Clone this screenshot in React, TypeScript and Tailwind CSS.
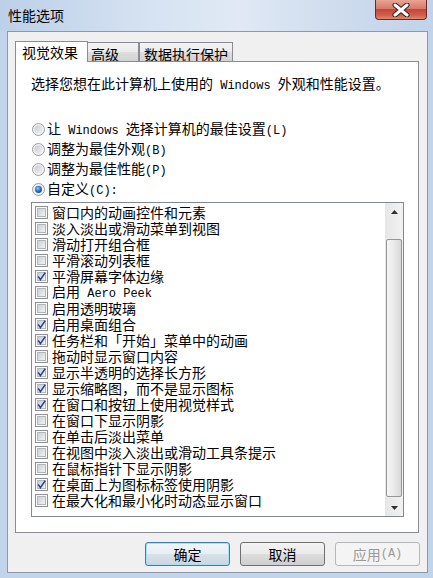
import React from 'react';

const cjk = "font-['Noto_Sans_CJK_SC','Noto_Sans_CJK_JP',sans-serif]";

const items: [string, boolean][] = [
  ['窗口内的动画控件和元素', false],
  ['淡入淡出或滑动菜单到视图', false],
  ['滑动打开组合框', false],
  ['平滑滚动列表框', false],
  ['平滑屏幕字体边缘', true],
  ['启用 Aero Peek', false],
  ['启用透明玻璃', false],
  ['启用桌面组合', true],
  ['任务栏和「开始」菜单中的动画', true],
  ['拖动时显示窗口内容', false],
  ['显示半透明的选择长方形', true],
  ['显示缩略图，而不是显示图标', true],
  ['在窗口和按钮上使用视觉样式', true],
  ['在窗口下显示阴影', false],
  ['在单击后淡出菜单', false],
  ['在视图中淡入淡出或滑动工具条提示', false],
  ['在鼠标指针下显示阴影', false],
  ['在桌面上为图标标签使用阴影', true],
  ['在最大化和最小化时动态显示窗口', false],
];

// ascii runs are drawn in a mono face, like SimSun's half-width glyphs
function Txt({ s }: { s: string }) {
  const parts = s.split(/([\x20-\x7e]+)/);
  return (
    <>
      {parts.map((p, i) =>
        /^[\x20-\x7e]+$/.test(p) ? (
          <span key={i} className="font-['Liberation_Mono',monospace] text-[12px]">
            {p}
          </span>
        ) : (
          <React.Fragment key={i}>{p}</React.Fragment>
        )
      )}
    </>
  );
}

function Check({ on }: { on: boolean }) {
  return (
    <svg width="13" height="13" viewBox="0 0 13 13" className="shrink-0">
      <defs>
        <linearGradient id="cbg" x1="0" y1="0" x2="1" y2="1">
          <stop offset="0" stopColor="#c6cbd2" />
          <stop offset="1" stopColor="#f6f6f6" />
        </linearGradient>
      </defs>
      <rect x="0.5" y="0.5" width="12" height="12" fill="#fdfdfd" stroke="#8e8f8f" />
      <rect x="2.5" y="2.5" width="8" height="8" fill="url(#cbg)" stroke="#b1b6bc" />
      {on && <path d="M3.2 6.4 L5.4 9.6 L10.2 2.6" fill="none" stroke="#233d8f" strokeWidth="1.5" />}
    </svg>
  );
}

function Radio({ on }: { on: boolean }) {
  return (
    <svg width="13" height="13" viewBox="0 0 13 13" className="shrink-0">
      <defs>
        <linearGradient id="rbg" x1="0" y1="0" x2="1" y2="1">
          <stop offset="0" stopColor="#c4c8ce" />
          <stop offset="1" stopColor="#f4f4f4" />
        </linearGradient>
        <radialGradient id="rdot" cx="0.4" cy="0.35" r="0.7">
          <stop offset="0" stopColor="#9ad0f8" />
          <stop offset="0.5" stopColor="#2f78c8" />
          <stop offset="1" stopColor="#173f86" />
        </radialGradient>
      </defs>
      <circle cx="6.5" cy="6.5" r="6" fill="#f7f7f7" stroke="#9a9b9c" />
      <circle cx="6.5" cy="6.5" r="4.2" fill="url(#rbg)" />
      {on && <circle cx="6.5" cy="6.5" r="3.4" fill="url(#rdot)" />}
    </svg>
  );
}

function Btn({ label, kind }: { label: string; kind?: 'default' | 'disabled' }) {
  if (kind === 'default')
    return (
      <div className="flex h-[24px] w-[85px] items-center justify-center rounded-[3px] border border-[#3c7fb1] bg-[linear-gradient(to_bottom,#f1f5f9_0%,#e8eef4_50%,#d9e1e9_50%,#ccd6df_100%)] text-[14px] shadow-[inset_0_0_0_1px_#a8dcf7]">
        <Txt s={label} />
      </div>
    );
  if (kind === 'disabled')
    return (
      <div className="flex h-[24px] w-[85px] items-center justify-center rounded-[3px] border border-[#b4b8bb] bg-[#f4f4f4] text-[14px] text-[#9a9a9a]">
        <Txt s={label} />
      </div>
    );
  return (
    <div className="flex h-[24px] w-[85px] items-center justify-center rounded-[3px] border border-[#707070] bg-[linear-gradient(to_bottom,#f2f2f2_0%,#ebebeb_50%,#dddddd_50%,#cfcfcf_100%)] text-[14px]">
      <Txt s={label} />
    </div>
  );
}

export default function App() {
  return (
    <div className={`${cjk} h-[578px] w-[433px] overflow-hidden bg-[#c1d4ea] text-black`}>
      {/* Title bar */}
      <div className="flex h-[31px] items-start justify-between bg-[linear-gradient(to_right,#bcd0e8_0%,#d6e3f2_35%,#e0e9f5_55%,#cddbed_80%,#c0d3ea_100%)]">
        <div className="pl-[8px] pt-[7px] text-[14px] leading-[16px]">性能选项</div>
        <div className="mr-[6px] flex h-[20px] w-[52px] items-center justify-center rounded-b-[4px] border border-t-0 border-[#6e2a22] bg-[linear-gradient(to_bottom,#e8a596_0%,#d77a68_45%,#c5463a_50%,#cf5e4b_80%,#e08a6c_100%)]">
          <svg width="18" height="14" viewBox="0 0 18 14">
            <path d="M3 2 L15 12 M15 2 L3 12" stroke="#3d1a16" strokeWidth="5" strokeLinecap="round" />
            <path d="M3 2 L15 12 M15 2 L3 12" stroke="#ffffff" strokeWidth="3" strokeLinecap="round" />
          </svg>
        </div>
      </div>

      {/* Client area */}
      <div className="ml-[7px] flex h-[542px] w-[421px] flex-col border border-[#8a99ab] bg-[#f0f0f0] pl-[7px] pt-[9px]">
        {/* Tabs */}
        <div className="flex h-[21px] items-end text-[14px] leading-[16px]">
          <div className="relative z-10 h-[21px] w-[73px] border border-b-0 border-[#898c95] bg-white pl-[6px] pt-[2px]">视觉效果</div>
          <div className="h-[20px] w-[51px] border border-b-0 border-l-0 border-[#898c95] bg-[linear-gradient(to_bottom,#f3f3f3_0%,#ebebeb_50%,#dddddd_50%,#d2d2d2_100%)] pl-[3px] pt-[3px]">
            高级
          </div>
          <div className="h-[20px] w-[94px] border border-b-0 border-[#898c95] bg-[linear-gradient(to_bottom,#f3f3f3_0%,#ebebeb_50%,#dddddd_50%,#d2d2d2_100%)] pl-[4px] pt-[3px]">
            数据执行保护
          </div>
        </div>

        {/* Tab page */}
        <div className="-mt-[1px] flex h-[472px] w-[404px] flex-col border border-[#898c95] bg-white pl-[15px] pt-[13px] text-[14px]">
          <div className="h-[16px] leading-[16px]">
            <Txt s="选择您想在此计算机上使用的 Windows 外观和性能设置。" />
          </div>

          <div className="mt-[28px] flex flex-col">
            {[
              ['让 Windows 选择计算机的最佳设置(L)', false],
              ['调整为最佳外观(B)', false],
              ['调整为最佳性能(P)', false],
              ['自定义(C):', true],
            ].map(([label, on]) => (
              <div key={label as string} className="flex h-[20px] items-center leading-[16px]">
                <div className="ml-[1px]">
                  <Radio on={on as boolean} />
                </div>
                <span className="ml-[2px]">
                  <Txt s={label as string} />
                </span>
              </div>
            ))}
          </div>

          {/* List box */}
          <div className="mt-[3px] flex h-[315px] w-[373px] border border-[#828790] bg-white">
            <div className="flex-1 overflow-hidden pl-[3px] pt-[1px]">
              {items.map(([label, on]) => (
                <div key={label} className="flex h-[16px] items-center whitespace-nowrap leading-[16px]">
                  <Check on={on} />
                  <span className="ml-[4px]">
                    <Txt s={label} />
                  </span>
                </div>
              ))}
            </div>

            {/* Scrollbar */}
            <div className="flex w-[18px] flex-col bg-[linear-gradient(to_right,#e6e6e6,#f2f2f2)]">
              <div className="flex h-[17px] items-center justify-center">
                <svg width="7" height="4" viewBox="0 0 7 4">
                  <path d="M0 4 L3.5 0 L7 4 Z" fill="#303030" />
                </svg>
              </div>
              <div className="flex-1 px-[1px]">
                <div className="mt-[19px] h-[258px] rounded-[2px] border border-[#979797] bg-[linear-gradient(to_right,#f5f5f5_0%,#e9e9e9_50%,#d8d8d8_100%)]" />
              </div>
              <div className="flex h-[17px] items-center justify-center">
                <svg width="7" height="4" viewBox="0 0 7 4">
                  <path d="M0 0 L7 0 L3.5 4 Z" fill="#303030" />
                </svg>
              </div>
            </div>
          </div>
        </div>

        {/* Dialog buttons */}
        <div className="mt-[9px] flex justify-end gap-[10px] pr-[7px]">
          <Btn label="确定" kind="default" />
          <Btn label="取消" />
          <Btn label="应用(A)" kind="disabled" />
        </div>
      </div>
    </div>
  );
}
